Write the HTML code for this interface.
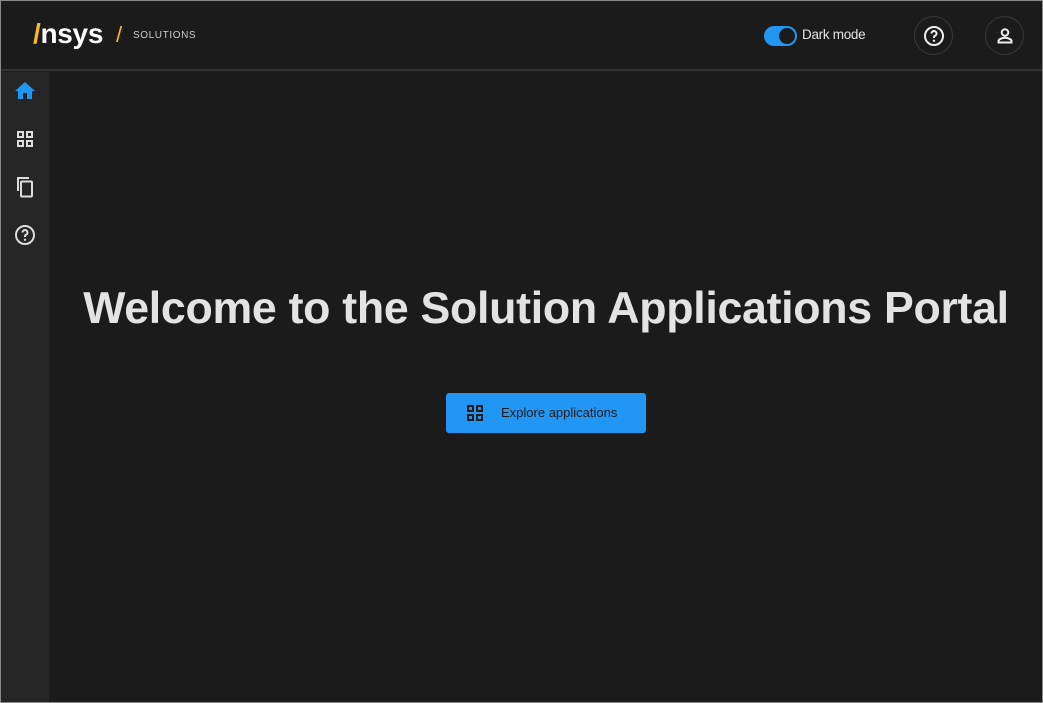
<!DOCTYPE html>
<html><head><style>
*{margin:0;padding:0;box-sizing:border-box}
body{width:1043px;height:703px;background:#1b1b1b;font-family:"Liberation Sans",sans-serif;overflow:hidden;position:relative}
.frame{position:absolute;inset:0;border:1px solid #8a8a8a;pointer-events:none;z-index:10}
.hdr{position:absolute;left:0;top:0;width:1043px;height:71px;background:#1b1b1b;border-bottom:2px solid #333}
.side{position:absolute;left:0;top:72px;width:49px;height:631px;background:#262626}
.ic{position:absolute;left:13px;width:24px;height:24px}
h1{position:absolute;left:49px;right:0;top:284px;text-align:center;color:#e3e3e3;font-size:44.7px;font-weight:bold;letter-spacing:-0.3px;white-space:nowrap}
.btn{position:absolute;left:446px;top:393px;width:200px;height:40px;background:#2196f3;border-radius:3px;color:#1b1b1b;font-size:13px}
.circ{position:absolute;top:16px;width:39px;height:39px;border:1px solid #3a3a3a;border-radius:50%}
</style></head><body>
<div class="hdr">
 <div style="position:absolute;left:33px;top:18px;font-size:28px;font-weight:bold;color:#fff;letter-spacing:-0.3px"><span style="color:#ffb71b">/</span>nsys</div>
 <div style="position:absolute;left:116px;top:22px;font-size:22px;color:#ffb71b">/</div>
 <div style="position:absolute;left:133px;top:30px;font-size:10px;color:#ccc;letter-spacing:0.6px">SOLUTIONS</div>
 <div style="position:absolute;left:764px;top:26px;width:33px;height:20px;background:#2196f3;border-radius:10px"><div style="position:absolute;right:2px;top:2px;width:16px;height:16px;background:#1b1b1b;border-radius:50%"></div></div>
 <div style="position:absolute;left:802px;top:27px;font-size:13.5px;color:#e3e3e3;letter-spacing:-0.3px">Dark mode</div>
 <div class="circ" style="left:914px"><svg style="position:absolute;left:7px;top:7px" width="24" height="24" viewBox="0 0 24 24"><circle cx="12" cy="12" r="9" fill="none" stroke="#eee" stroke-width="2"/><path d="M9.5 9.5a2.5 2.5 0 1 1 3.5 2.3c-.7.3-1 .8-1 1.5v.7" fill="none" stroke="#eee" stroke-width="2"/><circle cx="12" cy="16.8" r="1.2" fill="#eee"/></svg></div>
 <div class="circ" style="left:985px"><svg style="position:absolute;left:7px;top:7px" width="24" height="24" viewBox="0 0 24 24"><circle cx="12" cy="8.5" r="3.3" fill="none" stroke="#eee" stroke-width="2"/><path d="M5.5 18.5v-1.5c0-2 4-3.2 6.5-3.2s6.5 1.2 6.5 3.2v1.5z" fill="none" stroke="#eee" stroke-width="2"/></svg></div>
</div>
<div class="side">
 <svg class="ic" style="top:7px" viewBox="0 0 24 24"><path d="M10 20v-6h4v6h5v-8h3L12 3 2 12h3v8z" fill="#2196f3"/></svg>
 <svg class="ic" style="top:55px" viewBox="0 0 24 24"><g fill="none" stroke="#ddd" stroke-width="2"><rect x="5" y="5" width="5" height="5"/><rect x="14" y="5" width="5" height="5"/><rect x="5" y="14" width="5" height="5"/><rect x="14" y="14" width="5" height="5"/></g></svg>
 <svg class="ic" style="top:103px" viewBox="0 0 24 24"><path d="M16 2H4v14h2V4h10z" fill="#ddd"/><rect x="8" y="6.5" width="11" height="15" rx="1" fill="none" stroke="#ddd" stroke-width="2"/></svg>
 <svg class="ic" style="top:151px" viewBox="0 0 24 24"><circle cx="12" cy="12" r="9" fill="none" stroke="#ddd" stroke-width="2"/><path d="M9.5 9.5a2.5 2.5 0 1 1 3.5 2.3c-.7.3-1 .8-1 1.5v.7" fill="none" stroke="#ddd" stroke-width="2"/><circle cx="12" cy="16.8" r="1.2" fill="#ddd"/></svg>
</div>
<h1>Welcome to the Solution Applications Portal</h1>
<div class="btn">
 <svg style="position:absolute;left:17px;top:8px" width="24" height="24" viewBox="0 0 24 24"><g fill="none" stroke="#1b1b1b" stroke-width="2"><rect x="5" y="5" width="5" height="5"/><rect x="14" y="5" width="5" height="5"/><rect x="5" y="14" width="5" height="5"/><rect x="14" y="14" width="5" height="5"/></g></svg>
 <div style="position:absolute;left:55px;top:12px">Explore applications</div>
</div>
<div class="frame"></div>
</body></html>
